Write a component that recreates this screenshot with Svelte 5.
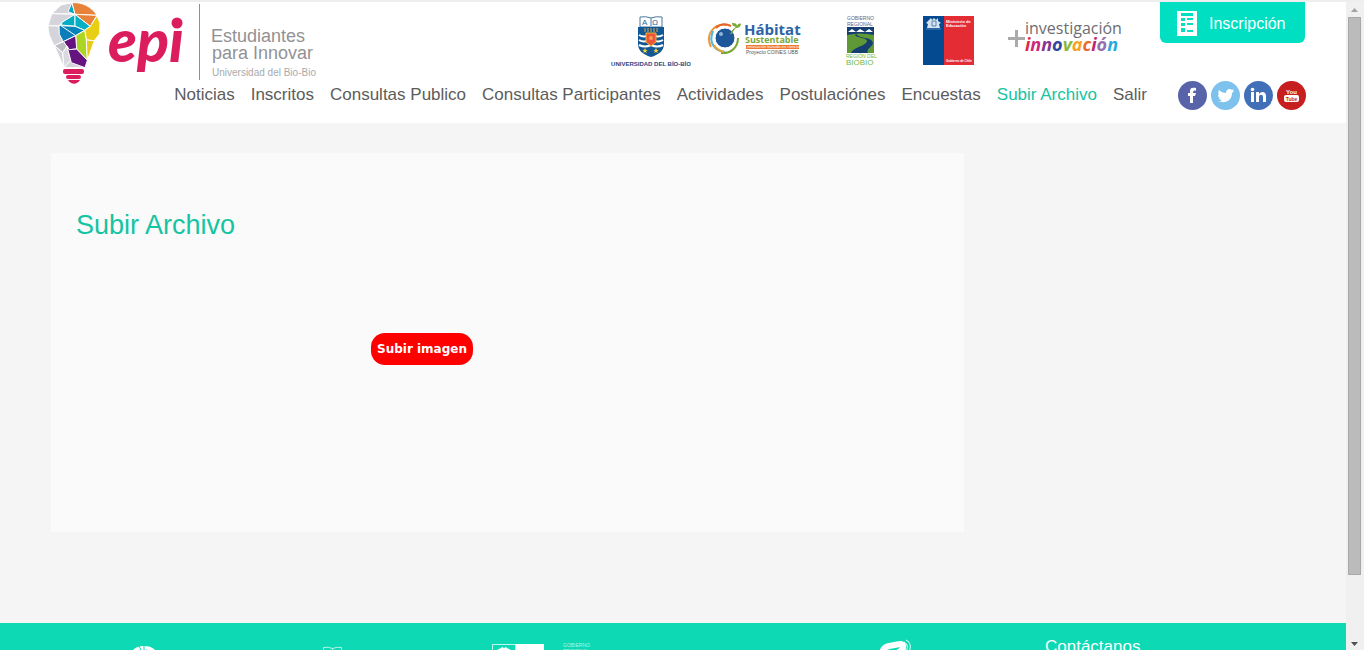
<script>
  const links = [
    'Noticias', 'Inscritos', 'Consultas Publico', 'Consultas Participantes',
    'Actividades', 'Postulaciónes', 'Encuestas', 'Subir Archivo', 'Salir'
  ];
  const current = 'Subir Archivo';
</script>

<div class="frame">
  <div class="page">
    <header>
      <div class="top">
        <a class="brand" href="#inicio" aria-label="epi, Estudiantes para Innovar">
          <svg width="270" height="84" viewBox="46 2 270 84">
            <g transform="scale(.33333) translate(120 0)" stroke="#fff" stroke-width="3" stroke-linejoin="round">
              <path fill="#d5d4da" d="M96 8 L63 15 L35 41 L88 42 L100 42Z" />
              <path fill="#00a9bd" d="M96 8 L84 35 L105 43Z" />
              <path fill="#e8823a" d="M96 8 C128 6 154 20 171 46 L105 43Z" />
              <path fill="#d5d4da" d="M35 41 L24 77 L57 78 L66 67 L105 43Z" />
              <path fill="#d5d4da" d="M24 77 C24 103 34 121 43 137 L70 124 L57 78Z" />
              <path fill="#00adc2" d="M105 43 L66 67 L63 77 L105 79Z" />
              <path fill="#06b0c4" d="M105 43 L105 79 L134 91 L151 79Z" />
              <path fill="#e8823a" d="M105 43 L171 46 L151 79Z" />
              <path fill="#0b7dba" d="M63 75 L57 78 L58 103 L70 125 L107 107 L105 79Z" />
              <path fill="#0784ba" d="M63 77 L105 79 L134 91 L107 107Z" />
              <path fill="#e9ce16" d="M171 47 L151 79 L134 91 L139 120 L163 122 L179 101 L180 69Z" />
              <path fill="#acd524" d="M107 107 L134 91 L139 120 L142 181 L110 147Z" />
              <path fill="#e7cb15" d="M139 120 L163 122 L142 181Z" />
              <path fill="#65147f" d="M70 125 L107 107 L110 147 L88 149Z" />
              <path fill="#bfbec4" d="M43 137 L70 125 L81 139 L68 158Z" />
              <path fill="#d3d2d8" d="M43 137 L68 158 L72 203Z" />
              <path fill="#dad9df" d="M68 158 L81 139 L92 181 L72 203Z" />
              <path fill="#d5d4da" d="M72 203 L92 181 L135 203Z" />
              <path fill="#65147f" d="M81 139 L88 149 L110 147 L142 181 L135 203 L94 188Z" />
            </g>
            <g fill="#dc1d5d">
              <rect x="63" y="69" width="21" height="5" rx="2" />
              <rect x="66" y="75" width="15" height="4" rx="2" />
              <path d="M68 80h12c-3 5-9 5-12 0z" />
              <text x="108" y="62" class="epi">epı</text>
              <circle cx="177" cy="23" r="5.5" />
            </g>
            <path d="M199.500 4v76" stroke="#8f8f92" />
            <g fill="#929295" font-size="18">
              <text x="211" y="42">Estudiantes</text>
              <text x="212" y="59">para Innovar</text>
            </g>
            <text x="212" y="76" fill="#aaaaad" font-size="10">Universidad del Bio-Bio</text>
          </svg>
        </a>

        <div class="partners">
          <svg width="80" height="60" viewBox="612 10 80 60" role="img" aria-label="Universidad del Bío-Bío">
            <path d="M640 17q6-1 11 1 5-2 11-1v10h-22z" fill="#fff" stroke="#49799f" />
            <path d="M651 18v8" stroke="#49799f" />
            <text x="642" y="25" font-size="8" fill="#28699c">A</text>
            <text x="652" y="25" font-size="8" fill="#28699c">Ω</text>
            <path d="M638 27h26v17c0 7-6 11-13 13-7-2-13-6-13-13z" fill="#125796" />
            <path d="M639 35q5 3 10 0m4 0q5 3 10 0M639 40q5 3 10 0m4 0q5 3 10 0M639 45q6 3 12 0 6 3 12 0" fill="none" stroke="#fff" stroke-width="2" />
            <path d="M645 28v4m3-4v4m3-4v4m3-4v4m3-4v4" stroke="#d7a945" />
            <path d="M646 33h10v9l-5 4-5-4z" fill="#ec553c" stroke="#f2b52a" />
            <circle cx="651" cy="38" r="2" fill="#f79c4d" />
            <path d="M645 48l1 2h2l-2 1 1 2-2-1-2 1 1-2-2-1h2zm11 0l1 2h2l-2 1 1 2-2-1-2 1 1-2-2-1h2z" fill="#ffd52d" />
            <text x="651" y="66" text-anchor="middle" class="strong" font-size="6" fill="#294783">UNIVERSIDAD DEL BÍO-BÍO</text>
          </svg>

          <svg width="92" height="60" viewBox="708 10 92 60" role="img" aria-label="Hábitat Sustentable">
            <g fill="none" stroke-width="2">
              <path d="M711 47c-6-12 2-24 16-22" stroke="#f29535" />
              <path d="M713 31c-5 12 2 20 12 21" stroke="#50b8dc" />
              <path d="M716 28c5-5 11-4 15-2" stroke="#e5632c" />
              <path d="M721 53c9 1 17-5 17-15" stroke="#79a831" />
              <path d="M714 45c2 4 6 6 10 7" stroke="#f0a02f" />
            </g>
            <circle cx="725" cy="38" r="10" fill="#1d5799" stroke="#fff" />
            <circle cx="721" cy="34" r="2" fill="#8fb5d6" />
            <path d="M730 34c2-4 3-5 6-7-3-1-4-2-4-4 4 0 5 1 5 3 1-2 2-3 4-2-1 3-2 4-5 4-2 2-3 3-4 6z" fill="#77aa35" />
            <text x="744" y="35" class="open strong" font-size="15" fill="#2b64a6">Hábitat</text>
            <text x="745" y="43" class="open strong" font-size="9" fill="#79a83b">Sustentable</text>
            <rect x="746" y="45" width="53" height="4" fill="#ef7930" />
            <text x="747" y="48" font-size="4" fill="#fff">innovación basada en ciencias</text>
            <text x="746" y="54" font-size="5" fill="#555">Proyecto COINES UBB</text>
          </svg>

          <svg width="91" height="60" viewBox="816 10 91 60" role="img" aria-label="Gobierno Regional, Región del Biobío">
            <g font-size="5" fill="#536789">
              <text x="847" y="20">GOBIERNO</text>
              <text x="847" y="26">REGIONAL</text>
            </g>
            <rect x="847" y="27" width="27" height="26" fill="#153f70" />
            <path d="M848 32l4-3 4 3 4-3 5 3 4-3 4 3z" fill="#fff" />
            <path d="M847 35q13-3 27 0v18h-27z" fill="#5f9836" />
            <path d="M856 34c-5 4 16 3 10 9-4 4-12 4-15 10h17c-3-5 8-7 4-12-2-4-12-2-16-7z" fill="#153f70" />
            <text x="846" y="58" font-size="5" fill="#73b94b">REGIÓN DEL</text>
            <text x="846" y="65" font-size="8" fill="#73b94b">BIOBIO</text>
          </svg>

          <svg width="69" height="60" viewBox="923 10 69 60" role="img" aria-label="Ministerio de Educación, Gobierno de Chile">
            <rect x="923" y="16" width="22" height="49" fill="#034a91" />
            <rect x="944" y="16" width="30" height="49" fill="#e32c33" />
            <path d="M929 20l2-2 1 2 2-2 2 2 2-2v3l3 2-2 1 1 4h-13l1-4-2-1z" fill="#d8e3ee" />
            <path d="M932 21h4v5h-4zm-6 8h15" stroke="#5483b3" fill="none" />
            <g fill="#fff" class="strong">
              <text x="946" y="23" font-size="4">Ministerio de</text>
              <text x="946" y="27" font-size="4">Educación</text>
              <text x="946" y="62" font-size="3">Gobierno de Chile</text>
            </g>
          </svg>

          <svg width="116" height="60" viewBox="1008 10 116 60" role="img" aria-label="+investigación innovación">
            <path d="M1008 38.500h17M1016.500 30v17" stroke="#aaa" stroke-width="3" />
            <text x="1025" y="34" class="open" font-size="16" fill="#6d6d70">investigación</text>
            <text x="1025" y="51" class="open strong slant" font-size="18"><tspan fill="#e12749">i</tspan><tspan fill="#cf257d">n</tspan><tspan fill="#843491">n</tspan><tspan fill="#30479d">o</tspan><tspan fill="#8bb83b">v</tspan><tspan fill="#f5a227">a</tspan><tspan fill="#ec6a2e">c</tspan><tspan fill="#bd2471">i</tspan><tspan fill="#9670ae">ó</tspan><tspan fill="#27a9dd">n</tspan></text>
          </svg>
        </div>

        <a class="signup" href="#inscripcion">
          <svg width="20" height="25" viewBox="0 0 20 25" aria-hidden="true">
            <path fill="#fff" d="M0 0h20v25H0z" />
            <path fill="#00dfc2" d="M4 2h12v3H4zM4 7h4v3H4zM4 12h4v3H4zM4 17h4v4H4zM10 7h6v2h-6zM10 12h6v2h-6zM10 19h6v2h-6z" />
          </svg>
          Inscripción
        </a>
      </div>

      <div class="bottom">
        <nav aria-label="Principal">
          {#each links as link}
            <a href="#menu" class:active={link === current} aria-current={link === current ? 'page' : undefined}>{link}</a>
          {/each}
        </nav>
        <div class="social">
          <a href="#facebook" aria-label="Facebook">
            <svg width="29" height="29" viewBox="0 0 29 29"><circle cx="14.500" cy="14.500" r="14.500" fill="#5963aa" /><path fill="#fff" d="M12 22v-7h-2v-3h2v-2c0-3 2-4 6-3v3c-2-1-3 0-3 2h3l-1 3h-2v7z" /></svg>
          </a>
          <a href="#twitter" aria-label="Twitter">
            <svg width="29" height="29" viewBox="0 0 29 29"><circle cx="14.500" cy="14.500" r="14.500" fill="#7dc1ed" /><path fill="#fff" d="M8 9c2 2 4 3 7 3 0-4 4-5 6-3l2-1-1 2h1l-2 2c0 8-7 11-14 8 2 0 3 0 4-1-2 0-3-1-3-2h1c-2-1-2-2-2-3h1c-1-1-1-3 0-5z" /></svg>
          </a>
          <a href="#linkedin" aria-label="LinkedIn">
            <svg width="29" height="29" viewBox="0 0 29 29"><circle cx="14.500" cy="14.500" r="14.500" fill="#416fb8" /><path fill="#fff" d="M7 11h3v10H7zM12 11h3v2c2-3 7-3 7 2v6h-3v-5c0-3-4-3-4 0v5h-3z" /><circle cx="8.500" cy="8.500" r="1.800" fill="#fff" /></svg>
          </a>
          <a href="#youtube" aria-label="YouTube">
            <svg width="29" height="29" viewBox="0 0 29 29"><circle cx="14.500" cy="14.500" r="14.500" fill="#c71e20" /><rect x="7" y="14" width="15" height="7" rx="2" fill="#fff" /><text x="14.500" y="13" font-size="6" text-anchor="middle" class="strong" fill="#fff">You</text><text x="14.500" y="20" font-size="5" text-anchor="middle" class="strong" fill="#c71e20">Tube</text></svg>
          </a>
        </div>
      </div>
    </header>

    <main>
      <section>
        <h1>Subir Archivo</h1>
        <button type="button">Subir imagen</button>
      </section>
    </main>

    <footer>
      <svg width="30" height="60" viewBox="0 0 30 60" aria-hidden="true">
        <path fill="#fff" d="M14 7c9 0 14 5 14 12 0 6-6 11-8 18H9C7 30 0 25 0 19 0 12 5 7 14 7z" />
        <path d="M1 14l10-3 2 4 3-4 11 3M11 11l-2-4M14 7v4" fill="none" stroke="#0dd9b4" />
      </svg>
      <svg width="20" height="60" viewBox="0 0 20 60" aria-hidden="true">
        <path d="M.500 8.500q5-1 9 1 5-2 9-1v8h-18zM9.500 9v8M3 15l2-4 2 4m5 0c-2-4 5-4 3 0" fill="none" stroke="#b9f5e9" />
      </svg>
      <svg width="53" height="60" viewBox="0 0 53 60" aria-hidden="true">
        <path fill="#fff" d="M23 5h29v48H23z" /><path d="M.500 5.500h23v47H.500z" fill="none" stroke="#c2f6ec" />
        <path fill="#fff" d="M5 11l4-2 1-1 2 1 2-1 1 1 4 2-2 5H7z" />
      </svg>
      <svg width="31" height="60" viewBox="0 0 31 60" aria-hidden="true">
        <g fill="#b4f4e7" font-size="5"><text x="0" y="8">GOBIERNO</text><text x="0" y="14">REGIONAL</text></g>
      </svg>
      <svg width="36" height="60" viewBox="0 0 36 60" aria-hidden="true">
        <path d="M4 28c-2-12-4-19 5-21 9-1 15-5 14 2-1 3-5 5-10 6" fill="none" stroke="#fff" stroke-width="6" />
        <path d="M24 3c4 2 4 6 2 9M26 1c5 2 5 8 3 12" fill="none" stroke="#fff" />
      </svg>
      <h2>Contáctanos</h2>
    </footer>
  </div>

  <div class="scrollbar" aria-hidden="true">
    <svg width="7" height="4" viewBox="0 0 7 4"><path d="M0 4L3.500 0 7 4z" fill="#a3a3a3" /></svg>
    <div class="track"><div class="thumb"></div></div>
    <svg width="7" height="4" viewBox="0 0 7 4"><path d="M0 0h7L3.500 4z" fill="#505050" /></svg>
  </div>
</div>

<style>
  :global(body) {
    margin: 0;
    font-family: "Liberation Sans", Arial, sans-serif;
    background: #f5f5f5;
  }
  .frame {
    display: grid;
    grid-template-columns: minmax(0, 1fr) 18px;
    height: 100vh;
    overflow: hidden;
    box-sizing: border-box;
    border-top: 2px solid #eee;
  }
  .page { overflow: hidden; }
  a { text-decoration: none; color: inherit; }
  svg { display: block; flex: none; overflow: visible; }
  header { background: #fff; padding-bottom: 13px; }
  .top {
    display: flex;
    align-items: flex-start;
    height: 79px;
    padding: 0 41px 0 46px;
  }
  .epi { font: italic 900 59px Lato, sans-serif; }
  .strong { font-weight: bold; }
  .slant { font-style: italic; }
  .open { font-family: "Open Sans", sans-serif; }
  .partners {
    display: flex;
    gap: 16px;
    margin-left: auto;
    padding-top: 8px;
  }
  .signup {
    display: flex;
    align-items: center;
    gap: 12px;
    box-sizing: border-box;
    width: 145px;
    height: 41px;
    margin-left: 36px;
    padding: 2px 0 0 17px;
    border-radius: 0 0 6px 6px;
    background: #00dfc2;
    color: #fff;
    font-size: 16px;
  }
  .bottom {
    display: flex;
    align-items: center;
    justify-content: flex-end;
    gap: 31px;
    padding-right: 40px;
  }
  nav {
    display: flex;
    gap: 16px;
    font-size: 17px;
    line-height: 20px;
    padding-bottom: 2px;
    color: #5c5c5c;
    white-space: nowrap;
  }
  .active { color: #14c4a2; }
  .social { display: flex; gap: 4px; }
  main {
    box-sizing: border-box;
    min-height: 500px;
    padding: 30px 51px;
  }
  section {
    box-sizing: border-box;
    width: 73.400%;
    min-height: 379px;
    padding: 56px 25px;
    background: #fafafa;
  }
  h1 {
    margin: 0 0 92px;
    font-size: 27px;
    line-height: 32px;
    font-weight: normal;
    color: #14c4a2;
  }
  button {
    display: block;
    height: 32px;
    margin-left: 295px;
    padding: 0 6px;
    border: 0;
    border-radius: 14px;
    background: #f00;
    color: #fff;
    font: bold 12px "DejaVu Sans", Verdana, sans-serif;
  }
  footer {
    display: grid;
    grid-template-columns: 193px 169px 71px 317px 165px 1fr;
    padding: 16px 0 16px 130px;
    background: #0dd9b4;
    color: #fff;
  }
  h2 {
    margin: 0;
    font-size: 17px;
    line-height: 16px;
    font-weight: normal;
  }
  .scrollbar {
    display: flex;
    flex-direction: column;
    align-items: center;
    gap: 5px;
    padding: 6px 2px 4px 0;
    background: #f0f0f0;
  }
  .track { flex: 1; }
  .thumb {
    box-sizing: border-box;
    width: 13px;
    height: 90%;
    border: 1px solid #a8a8a8;
    background: #bbb;
  }
</style>
